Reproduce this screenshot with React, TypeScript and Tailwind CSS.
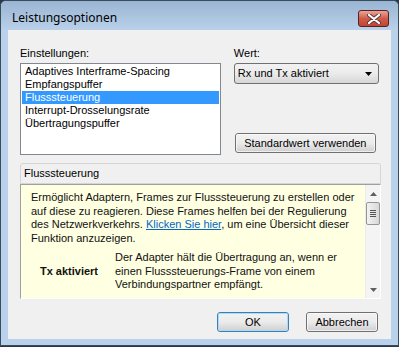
import React from "react";

const ui = { fontFamily: '"Liberation Sans", Arial, sans-serif' };

function WinButton({ children, focused, className = "" }: { children: React.ReactNode; focused?: boolean; className?: string }) {
  return (
    <div
      className={`h-[20px] rounded-[3px] border ${
        focused ? "border-[#3c7fb1]" : "border-[#707070]"
      } bg-gradient-to-b from-[#f2f2f2] via-[#ebebeb] to-[#cfcfcf] flex items-center justify-center text-[11px] text-black ${className}`}
    >
      <div
        className={`w-full h-full rounded-[2px] border ${
          focused ? "border-[#a8dcf8]" : "border-[#fcfcfc]/70"
        } flex items-center justify-center`}
      >
        {children}
      </div>
    </div>
  );
}

export default function App() {
  const items = [
    "Adaptives Interframe-Spacing",
    "Empfangspuffer",
    "Flusssteuerung",
    "Interrupt-Drosselungsrate",
    "Übertragungspuffer",
  ];

  return (
    <div className="w-[399px] h-[347px] bg-[#27394a]" style={ui}>
      <div className="w-[399px] h-[346px] rounded-t-[6px] border border-[#3a4b5c] bg-[#b9d1ea] flex flex-col overflow-hidden">
        {/* Title bar */}
        <div className="h-[29px] shrink-0 flex items-start justify-between bg-gradient-to-b from-[#9ab5d3] to-[#b9d1ea]">
          <span
            className="pl-[11px] pt-[10px] text-[12px] leading-[14px] text-black"
            style={{ fontFamily: '"Noto Sans", "Open Sans", sans-serif' }}
          >
            Leistungsoptionen
          </span>
          <div className="mt-[9px] mr-[9px] w-[31px] h-[17px] rounded-[3px] border border-[#5b1f1f] bg-gradient-to-b from-[#e7a699] via-[#cf5b4b] to-[#c14632] flex items-center justify-center">
            <svg width="14" height="10" viewBox="0 0 14 10">
              <path d="M2 1 L12 9 M12 1 L2 9" stroke="#5a3a3a" strokeWidth="4" strokeLinecap="round" />
              <path d="M2 1 L12 9 M12 1 L2 9" stroke="#ffffff" strokeWidth="2.2" strokeLinecap="round" />
            </svg>
          </div>
        </div>

        {/* Client area */}
        <div className="mx-[7px] h-[309px] shrink-0 bg-[#f0f0f0] px-[12px] pt-[17px] flex flex-col">
          <div className="flex">
            <div className="w-[202px]">
              <div className="h-[13px] leading-[13px] text-[11px] text-black mb-[3px]">Einstellungen:</div>
              <div className="h-[92px] border border-[#828790] bg-white pt-[1px] px-[1px]">
                {items.map((it) => (
                  <div
                    key={it}
                    className={`h-[13px] leading-[13px] text-[11px] pl-[3px] ${
                      it === "Flusssteuerung" ? "bg-[#3399ff] text-white" : "text-black"
                    }`}
                  >
                    {it}
                  </div>
                ))}
              </div>
            </div>
            <div className="w-[146px] ml-[13px]">
              <div className="h-[13px] leading-[13px] text-[11px] text-black mb-[3px]">Wert:</div>
              <div className="h-[21px] rounded-[3px] border border-[#707070] bg-gradient-to-b from-[#f2f2f2] via-[#ebebeb] to-[#d6d6d6] flex items-center justify-between pl-[3px] pr-[6px] text-[11px] text-black">
                <span>Rx und Tx aktiviert</span>
                <svg width="7" height="4" viewBox="0 0 7 4">
                  <path d="M0 0 H7 L3.5 4 Z" fill="#000" />
                </svg>
              </div>
              <WinButton className="mt-[49px] ml-[1px] w-[141px]">Standardwert verwenden</WinButton>
            </div>
          </div>

          {/* Group */}
          <div className="mt-[8px] w-[361px]">
            <div className="h-[21px] rounded-t-[3px] border border-[#d5d5d5] bg-[#f0f0f0] pl-[3px] flex items-center text-[11px] text-black">
              Flusssteuerung
            </div>
            <div className="h-[115px] flex border-l border-t border-[#a0a0a0] border-r border-b border-r-white border-b-white bg-[#ffffe1]">
              <div className="flex-1 pl-[10px] pt-[6px] text-[11px] leading-[13.5px] text-[#111]">
                <p>
                  Ermöglicht Adaptern, Frames zur Flusssteuerung zu erstellen oder
                  <br />
                  auf diese zu reagieren. Diese Frames helfen bei der Regulierung
                  <br />
                  des Netzwerkverkehrs.{" "}
                  <span className="text-[#0066cc] underline">Klicken Sie hier</span>, um eine Übersicht dieser
                  <br />
                  Funktion anzuzeigen.
                </p>
                <div className="flex mt-[6px]">
                  <div className="w-[76px] flex items-center justify-center font-bold">Tx aktiviert</div>
                  <div className="ml-[8px]">
                    Der Adapter hält die Übertragung an, wenn er
                    <br />
                    einen Flusssteuerungs-Frame von einem
                    <br />
                    Verbindungspartner empfängt.
                  </div>
                </div>
              </div>
              {/* Scrollbar */}
              <div className="w-[15px] bg-[#f4f4f4] border-l border-[#ececec] flex flex-col items-center">
                <div className="h-[17px] flex items-center justify-center">
                  <svg width="7" height="4" viewBox="0 0 7 4">
                    <path d="M0 4 H7 L3.5 0 Z" fill="#606060" />
                  </svg>
                </div>
                <div className="w-[14px] h-[23px] rounded-[2px] border border-[#959595] bg-gradient-to-r from-[#f3f3f3] to-[#d8d8d8] flex flex-col items-center justify-center gap-[1px]">
                  <div className="w-[6px] h-[1px] bg-[#555]" />
                  <div className="w-[6px] h-[1px] bg-[#555]" />
                  <div className="w-[6px] h-[1px] bg-[#555]" />
                  <div className="w-[6px] h-[1px] bg-[#555]" />
                </div>
                <div className="flex-1" />
                <div className="h-[17px] flex items-center justify-center">
                  <svg width="7" height="4" viewBox="0 0 7 4">
                    <path d="M0 0 H7 L3.5 4 Z" fill="#606060" />
                  </svg>
                </div>
              </div>
            </div>
          </div>

          {/* Buttons */}
          <div className="mt-[13px] flex justify-end gap-[17px] pr-[1px]">
            <WinButton focused className="w-[72px]">OK</WinButton>
            <WinButton className="w-[72px]">Abbrechen</WinButton>
          </div>
        </div>
        <div className="flex-1" />
      </div>
    </div>
  );
}
